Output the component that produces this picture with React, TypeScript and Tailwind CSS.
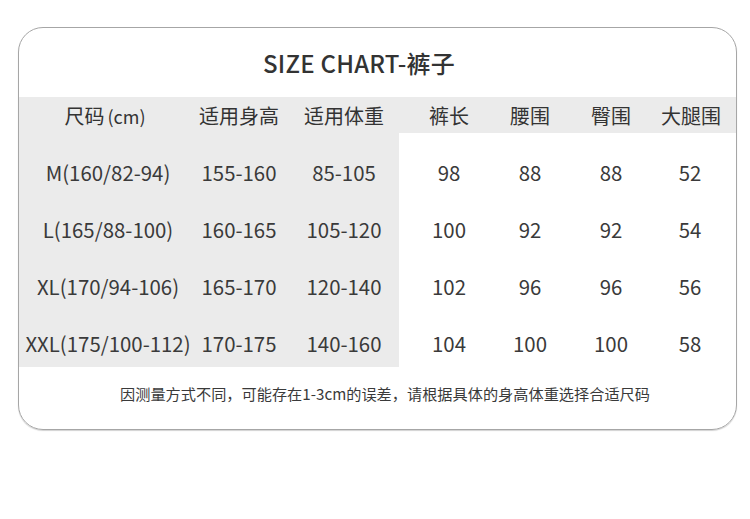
import React from "react";

const font = { fontFamily: '"Noto Sans CJK SC", "Noto Sans", sans-serif' };

const colW = ["w-[178px]", "w-[84px]", "w-[118px] pl-[8px]", "w-[100px]", "w-[62px]", "w-[100px]", "w-[58px]"];

const rows = [
  ["M(160/82-94)", "155-160", "85-105", "98", "88", "88", "52"],
  ["L(165/88-100)", "160-165", "105-120", "100", "92", "92", "54"],
  ["XL(170/94-106)", "165-170", "120-140", "102", "96", "96", "56"],
  ["XXL(175/100-112)", "170-175", "140-160", "104", "100", "100", "58"],
];

const rowPad = ["pt-[27px] pb-[18px]", "pt-[15px] pb-[18px]", "pt-[15px] pb-[18px]", "pt-[15px] pb-[12px]"];

export default function App() {
  return (
    <div className="w-[750px] h-[519px] bg-white pt-[27px] pl-[18px]" style={font}>
      <div className="w-[719px] h-[403px] border border-[#a6a6a6] rounded-[25px] overflow-hidden flex flex-col shadow-[0_1px_1px_rgba(0,0,0,0.18)] text-[#333]">
        <div className="h-[69px] flex items-center justify-center pr-[37px] text-[24px] font-medium text-[#333] tracking-[0.2px]">
          SIZE CHART-裤子
        </div>
        <div className="h-[36px] bg-[#ebebeb] flex items-center text-[20px] leading-[24px] whitespace-nowrap pt-[2px]">
          <div className={`${colW[0]} text-center`}>
            <span className="pr-[6px]">尺码<span className="text-[18px] pl-[3px]">(cm)</span></span>
          </div>
          <div className={`${colW[1]} text-center`}>适用身高</div>
          <div className={`${colW[2]} text-center`}>适用体重</div>
          <div className={`${colW[3]} text-center`}>裤长</div>
          <div className={`${colW[4]} text-center`}>腰围</div>
          <div className={`${colW[5]} text-center`}>臀围</div>
          <div className={`${colW[6]} text-center`}>大腿围</div>
        </div>
        {rows.map((r, i) => (
          <div key={i} className="flex text-[20.4px] leading-[24px] text-[#3a3a3a]">
            {r.map((c, j) => (
              <div
                key={j}
                className={`${colW[j]} text-center whitespace-nowrap ${rowPad[i]} ${j < 3 ? "bg-[#ebebeb]" : ""}`}
              >
                {c}
              </div>
            ))}
          </div>
        ))}
        <div className="flex-1 pt-[15px] pl-[15px] text-center text-[15.2px] leading-[22px] text-[#3a3a3a] whitespace-nowrap">
          因测量方式不同，可能存在1-3cm的误差，请根据具体的身高体重选择合适尺码
        </div>
      </div>
    </div>
  );
}
